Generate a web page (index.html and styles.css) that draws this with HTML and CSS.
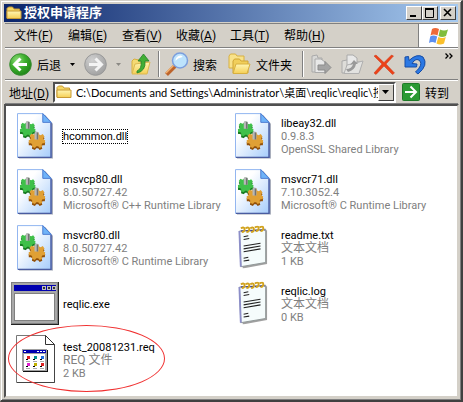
FILE: index.html
```html
<!DOCTYPE html>
<html lang="zh-CN">
<head>
    <meta charset="UTF-8">
    <meta name="viewport" content="width=device-width, initial-scale=1.0">
    <title>授权申请程序</title>
    <link rel="stylesheet" href="styles.css">
</head>
<body>
    <!-- shared icons -->
    <svg class="defs" width="0" height="0" aria-hidden="true">
        <defs>
            <linearGradient id="page" x1="0" y1="0" x2="1" y2="1">
                <stop offset="0.3" stop-color="#fff"/>
                <stop offset="1" stop-color="#a5ccfb"/>
            </linearGradient>
            <linearGradient id="yellow" x1="0" y1="0" x2="0" y2="1">
                <stop offset="0" stop-color="#fff6b4"/>
                <stop offset="1" stop-color="#f5cf55"/>
            </linearGradient>
            <radialGradient id="green" cx="0.35" cy="0.3" r="0.75">
                <stop offset="0" stop-color="#8fdc7a"/>
                <stop offset="0.5" stop-color="#3cae2c"/>
                <stop offset="1" stop-color="#1e8416"/>
            </radialGradient>
            <radialGradient id="grey" cx="0.35" cy="0.3" r="0.75">
                <stop offset="0" stop-color="#d0d0d0"/>
                <stop offset="1" stop-color="#a0a0a0"/>
            </radialGradient>
        </defs>
        <symbol id="gear" viewBox="-10 -10 20 20">
            <path d="M-2-9h4l.6 2.500 2 .8L7-7l2.200 2.800-1.600 2 .6 2L10 .5 9.500 4l-2.700.1-1.200 1.700.9 2.500L3.300 9.800 1.500 7.700h-2.300L-2.500 9.800-6 8.400l.3-2.700-1.400-1.500-2.700 0L-10 .6l2.300-1.200.4-2L-9-4.700-6.700-7.500l2.400 1.100 1.900-.8z"/>
        </symbol>
        <symbol id="dll" viewBox="0 0 37 48">
            <path d="M2 3h27l8 9v36H2z" fill="#6f7890" opacity=".6"/>
            <path d="M.5 1.500h26l8.500 9V46.500H.5z" fill="url(#page)" stroke="#8fb4f0"/>
            <path d="M1 46.500h34V11" fill="none" stroke="#4a5ca0" stroke-width="1.500"/>
            <path d="M26.500 1.500l8.500 9h-8.500z" fill="#6fb3f8" stroke="#4a7ad0"/>
            <use href="#gear" x="2" y="11" width="18" height="16" fill="#187a22"/>
            <use href="#gear" x="2" y="9" width="18" height="16" fill="#3fc04a"/>
            <use href="#gear" x="11" y="22" width="19" height="17" fill="#925009"/>
            <use href="#gear" x="11" y="20" width="19" height="17" fill="#e0a035"/>
            <path d="M9 10q2-2 4 0v7H9zM18 21q2-2 4 0v7h-4z" fill="#b8b8b8"/>
            <path d="M12 10v7M21 21v7" stroke="#727272" stroke-width="1.500"/>
        </symbol>
        <symbol id="text" viewBox="0 0 32 46">
            <path d="M4 7L31 5v36L5 46z" fill="#777" opacity=".7"/>
            <path d="M1.500 6L29.500 4v35.500L3 44z" fill="#f5fcfc" stroke="#8d9494"/>
            <path d="M1.500 6L3 44" stroke="#8c8ec8" stroke-width="2"/>
            <path d="M3 6l26-1" stroke="#46468c" stroke-width="1.500" stroke-dasharray="3 2"/>
            <path d="M3 3q4-2 4 1t-3 3M8 3q4-2 4 1t-3 3M13 3q4-2 4 1t-3 3M18 2q4-2 4 1t-3 3M23 2q4-2 4 1t-3 3" fill="none" stroke="#d1a21d" stroke-width="2"/>
            <path d="M6 12l5-1M6 15l6-1M6 22l18-3M6 25l18-3M6 28l18-3M6 35l5-1M6 38l6-1" stroke="#222" stroke-width="1.200"/>
        </symbol>
        <symbol id="folder" viewBox="0 0 16 14">
            <path d="M1 12V2.500L2.500 1h4L8 3h5.500v9z" fill="#f5d764" stroke="#c89a35"/>
            <path d="M1 12.500V5h14v7.500z" fill="url(#yellow)" stroke="#c89a35"/>
        </symbol>
    </svg>

    <div class="window">
        <header class="titlebar">
            <svg class="small-icon" viewBox="0 0 16 14"><use href="#folder"/></svg>
            <h1>授权申请程序</h1>
            <div class="window-buttons">
                <button aria-label="最小化"><svg viewBox="0 0 12 10"><path d="M2 8h6" stroke="#000" stroke-width="2"/></svg></button>
                <button aria-label="最大化"><svg viewBox="0 0 12 10"><path d="M1.500 1v8.500h8V1" fill="none" stroke="#000"/><path d="M1 1h9" stroke="#000" stroke-width="2"/></svg></button>
                <button class="close" aria-label="关闭"><svg viewBox="0 0 12 10"><path d="M2 1l7 7M9 1L2 8" stroke="#000" stroke-width="1.600"/></svg></button>
            </div>
        </header>

        <nav class="menubar">
            <div class="menu">
                <button>文件(<u>F</u>)</button>
                <button>编辑(<u>E</u>)</button>
                <button>查看(<u>V</u>)</button>
                <button>收藏(<u>A</u>)</button>
                <button>工具(<u>T</u>)</button>
                <button>帮助(<u>H</u>)</button>
            </div>
            <div class="flag">
                <svg width="20" height="18" viewBox="0 0 20 18">
                    <path d="M3 2q3-2 7 0L8.500 8.500q-4-2-7 0z" fill="#ee6a38"/>
                    <path d="M11 2.500q4 2 8 0L17 9q-4 2-7.500 0z" fill="#7fbd3c"/>
                    <path d="M1.200 9.500q3-2 7 0L6.500 16q-3.500-2-6.500 0z" fill="#5c8ff0"/>
                    <path d="M9.300 10q4 2 7.500 0L15 16.500q-4 2-7.500 0z" fill="#fbc02c"/>
                </svg>
            </div>
        </nav>

        <div class="toolbar">
            <button class="tool back">
                <svg width="23" height="23" viewBox="0 0 23 23"><circle cx="11.500" cy="11.500" r="10.800" fill="url(#green)" stroke="#3b8c34"/><path d="M18 11.500H6M11.500 5.500l-6 6 6 6" fill="none" stroke="#fff" stroke-width="3"/></svg>
                <span>后退</span>
            </button>
            <button class="tool arrow" aria-label="后退列表"><svg width="5" height="3" viewBox="0 0 5 3"><path d="M0 0h5L2.500 3z"/></svg></button>
            <button class="tool" aria-label="前进">
                <svg width="23" height="23" viewBox="0 0 23 23"><circle cx="11.500" cy="11.500" r="10.800" fill="url(#grey)" stroke="#999"/><path d="M5 11.500h12M11.500 5.500l6 6-6 6" fill="none" stroke="#f4f4f4" stroke-width="3"/></svg>
            </button>
            <button class="tool arrow" aria-label="前进列表"><svg width="5" height="3" viewBox="0 0 5 3"><path d="M0 0h5L2.500 3z" fill="#8b8984"/></svg></button>
            <button class="tool up" aria-label="向上">
                <svg width="20" height="23" viewBox="0 0 20 23">
                    <path d="M1 20V8l2-2 5 1 1 2h8l-1 11z" fill="#f4da73" stroke="#d8b040"/>
                    <path d="M1 21L4 11l15-2-3 12z" fill="url(#yellow)" stroke="#dcb850"/>
                    <path d="M6 18q5-2 4-10H7L12.500 1 18 8h-4q1 10-8 12z" fill="#41ae35" stroke="#23802a" stroke-width=".8"/>
                </svg>
            </button>
            <span class="separator"></span>
            <button class="tool search">
                <svg width="24" height="24" viewBox="0 0 24 24">
                    <path d="M1.500 22.500L10 14" stroke="#bd642b" stroke-width="4"/>
                    <path d="M1 21l8-8" stroke="#f2b271" stroke-width="1.500"/>
                    <circle cx="15" cy="8.500" r="7.500" fill="#bde3fc" stroke="#7c9fdd" stroke-width="1.500"/>
                    <path d="M10.500 9q0-5 5-5.500 2 0 2 1.500-5 1-7 4z" fill="#fff"/>
                </svg>
                <span>搜索</span>
            </button>
            <button class="tool folders">
                <svg width="23" height="22" viewBox="0 0 23 22">
                    <path d="M1 15V3l1.500-2h5L9 3h7v12z" fill="#f8e28a" stroke="#d8b040"/>
                    <path d="M5 20V8l1.500-2h5L13 8h7v12z" fill="#f1cf5b" stroke="#d0a535"/>
                    <path d="M5 20.500L8 11h14l-3 9.500z" fill="url(#yellow)" stroke="#d8b040"/>
                </svg>
                <span>文件夹</span>
            </button>
            <span class="separator"></span>
            <button class="tool edit" aria-label="移至">
                <svg width="21" height="21" viewBox="0 0 21 21"><path d="M1 18V2l5-1 1 3h4v14z" fill="#d8d8d6" stroke="#aaa"/><path d="M4 18.500V5h6l4 3v10.500z" fill="#e8e8e8" stroke="#aaa"/><path d="M7 11h7V7.500l6 6-6 6V16H7z" fill="#a4a4a4" stroke="#8c8c8c"/></svg>
            </button>
            <button class="tool edit" aria-label="复制到">
                <svg width="23" height="21" viewBox="0 0 23 21"><path d="M1 19V7l5-1 2 2h13l-3 11z" fill="#deddd9" stroke="#aaa"/><path d="M6 15V1h6l4 3v11z" fill="#e8e8e8" stroke="#aaa"/><path d="M3 19.500L6 11l16-4-4 12.500z" fill="#e2e2e0" stroke="#b0b0b0"/><path d="M5 15q6 0 7-5l-3 1 4-5 4 4-2 0q-1 6-8 8z" fill="#999"/></svg>
            </button>
            <button class="tool edit" aria-label="删除">
                <svg width="22" height="21" viewBox="0 0 22 21"><path d="M1 2l2-1 8 7.500L18.500 1l2 1-7.500 8 8.500 9-2 1.500-8.500-8.500L3 20.500 1 19l8-9z" fill="#ec4218" stroke="#cf3516" stroke-width=".5"/></svg>
            </button>
            <button class="tool edit" aria-label="撤消">
                <svg width="23" height="21" viewBox="0 0 23 21"><path d="M1 3l3.500-.5.5 4Q13-1 19 3q6 8-5 17l-2.500-2Q19 11 16 7q-4-4-8 2.500l5 .5-.5 3L1 13z" fill="#2b78e4" stroke="#174da5"/></svg>
            </button>
            <button class="tool more" aria-label="更多"><svg width="8" height="6" viewBox="0 0 8 6"><path d="M.5.500L3 3 .5 5.500M4.500.500L7 3 4.500 5.500" fill="none" stroke="#000" stroke-width="1.300"/></svg></button>
        </div>

        <form class="addressbar">
            <label for="address">地址(<u>D</u>)</label>
            <div class="combo">
                <svg class="small-icon" viewBox="0 0 16 14"><use href="#folder"/></svg>
                <input type="text" id="address" value="C:\Documents and Settings\Administrator\桌面\reqlic\reqlic\授权申请程序" autocomplete="off">
                <button type="button" aria-label="地址列表"><svg width="7" height="4" viewBox="0 0 7 4"><path d="M0 0h7L3.500 4z"/></svg></button>
            </div>
            <button type="button" class="go">
                <svg width="18" height="18" viewBox="0 0 18 18"><rect x=".5" y=".5" width="17" height="17" rx="1" fill="#2b9a34" stroke="#1e7a27"/><path d="M3 9h10M8.500 3.500L14 9l-5.500 5.500" fill="none" stroke="#fff" stroke-width="2"/></svg>
                <span>转到</span>
            </button>
        </form>

        <main class="pane">
            <ul class="files">
                <li>
                    <svg class="dll" viewBox="0 0 37 48"><use href="#dll"/></svg>
                    <div><p class="name focused">hcommon.dll</p></div>
                </li>
                <li>
                    <svg class="dll" viewBox="0 0 37 48"><use href="#dll"/></svg>
                    <div><p class="name">libeay32.dll</p><p>0.9.8.3</p><p>OpenSSL Shared Library</p></div>
                </li>
                <li>
                    <svg class="dll" viewBox="0 0 37 48"><use href="#dll"/></svg>
                    <div><p class="name">msvcp80.dll</p><p>8.0.50727.42</p><p>Microsoft® C++ Runtime Library</p></div>
                </li>
                <li>
                    <svg class="dll" viewBox="0 0 37 48"><use href="#dll"/></svg>
                    <div><p class="name">msvcr71.dll</p><p>7.10.3052.4</p><p>Microsoft® C Runtime Library</p></div>
                </li>
                <li>
                    <svg class="dll" viewBox="0 0 37 48"><use href="#dll"/></svg>
                    <div><p class="name">msvcr80.dll</p><p>8.0.50727.42</p><p>Microsoft® C Runtime Library</p></div>
                </li>
                <li>
                    <svg class="text" viewBox="0 0 32 46"><use href="#text"/></svg>
                    <div><p class="name">readme.txt</p><p class="type">文本文档</p><p>1 KB</p></div>
                </li>
                <li>
                    <svg class="exe" viewBox="0 0 48 43">
                        <path d="M0 0h48v43H0z" fill="#222"/>
                        <path d="M0 0h47v42H0z" fill="#808080"/>
                        <path d="M1 1h45v40H1z" fill="#a8a8a8"/>
                        <path d="M3 3h42v6H3z" fill="#0000b0"/>
                        <path d="M31 4h4v4h-4zM36 4h4v4h-4zM41 4h4v4h-4z" fill="#c0c0c0"/>
                        <path d="M32 5h2v2h-2zM37 5h2v2h-2zM42 5h2v2h-2z" fill="#333"/>
                        <path d="M3 11h41v28H3z" fill="#808080"/>
                        <path d="M4 12h39v26H4z" fill="#fff"/>
                    </svg>
                    <div><p class="name">reqlic.exe</p></div>
                </li>
                <li>
                    <svg class="text" viewBox="0 0 32 46"><use href="#text"/></svg>
                    <div><p class="name">reqlic.log</p><p class="type">文本文档</p><p>0 KB</p></div>
                </li>
                <li class="marked">
                    <svg class="req" viewBox="0 0 39 48">
                        <path d="M.5.500h29l9 9v38H.5z" fill="#fff" stroke="#777"/>
                        <path d="M29.500.500v9h9z" fill="#fff" stroke="#333"/>
                        <path d="M38.500 10v37.500H1" fill="none" stroke="#444"/>
                        <path d="M7 15h25v22H7z" fill="#111"/>
                        <path d="M6 14h25v22H6z" fill="#a0a0a0"/>
                        <path d="M7 15h23v3H7z" fill="#0000b0"/>
                        <path d="M8 16h2v1H8zM21 16h2v1h-2zM24 16h2v1h-2zM27 16h2v1h-2z" fill="#fff"/>
                        <path d="M8 19h21v16H8z" fill="#fff"/>
                        <path d="M11 21h3v3h-3zM25 28h3v3h-3z" fill="#e02020"/>
                        <path d="M18 21h3v3h-3z" fill="#079292"/>
                        <path d="M25 21h3v3h-3z" fill="#2470e0"/>
                        <path d="M11 28h3v3h-3z" fill="#e020d0"/>
                        <path d="M18 28h3v3h-3z" fill="#c0b000"/>
                        <path d="M10 24h2v1h-2zM17 24h2v1h-2zM24 24h2v1h-2zM10 31h2v1h-2zM17 31h2v1h-2zM24 31h2v1h-2z" fill="#000"/>
                        <path d="M10 26.500h4M17 26.500h4M24 26.500h4M10 33.500h4M17 33.500h4M24 33.500h4" stroke="#aaa"/>
                    </svg>
                    <div><p class="name">test_20081231.req</p><p class="type">REQ 文件</p><p>2 KB</p></div>
                </li>
            </ul>
        </main>
    </div>
</body>
</html>
```
FILE: styles.css
```css
*{
    box-sizing: border-box;
}
body{
    margin: 0;
    font-family: Roboto, "Noto Sans CJK SC", sans-serif;
    font-size: 11px;
    color: #000;
    background-color: #d4d0c8;
}
button, input{
    font: inherit;
    color: inherit;
    margin: 0;
    padding: 0;
    border: none;
    background: none;
}
svg{
    display: block;
    flex: none;
}
.defs{
    position: absolute;
}
.window{
    display: flex;
    flex-direction: column;
    min-height: 100vh;
    padding: 2px 2px 2px 3px;
    border: 1px solid #d4d0c8;
    border-right: 2px solid #404040;
    border-bottom: 2px solid #404040;
    box-shadow: inset 1px 1px #fff, inset -1px -1px #808080;
    background-color: #d4d0c8;
}
.small-icon{
    width: 16px;
    height: 14px;
}

/* title bar */
.titlebar{
    display: flex;
    align-items: center;
    height: 18px;
    margin: 1px 1px 0 0;
    padding: 0 2px;
    background: linear-gradient(to right, #0a246a, #a6caf0);
}
.titlebar h1{
    flex: 1;
    margin: 0 0 0 2px;
    font-size: 13px;
    line-height: 18px;
    color: #fff;
}
.window-buttons{
    display: flex;
}
.window-buttons button{
    width: 16px;
    height: 14px;
    padding: 1px;
    border: 1px solid;
    border-color: #fff #404040 #404040 #fff;
    background-color: #d4d0c8;
}
.window-buttons .close{
    margin-left: 2px;
}

/* menu */
.menubar{
    display: flex;
    height: 25px;
    margin: 1px 1px 0;
    border-top: 1px solid #808080;
    border-bottom: 1px solid #808080;
}
.menu{
    flex: 1;
    display: flex;
    align-items: center;
    padding-left: 1px;
    border-right: 1px solid #808080;
    font-size: 12px;
}
.menu button{
    width: 54px;
    line-height: 18px;
    padding-left: 8px;
    text-align: left;
    white-space: nowrap;
}
.flag{
    display: flex;
    align-items: center;
    justify-content: center;
    width: 39px;
    background-color: #fff;
}

/* toolbar */
.toolbar{
    display: flex;
    align-items: center;
    height: 32px;
    margin: 0 1px;
    padding-left: 4px;
    border-top: 1px solid #fff;
    border-bottom: 1px solid #808080;
    font-size: 12px;
}
.tool{
    display: flex;
    align-items: center;
    gap: 5px;
    white-space: nowrap;
}
.arrow{
    padding: 0 9px;
}
.up{
    margin-left: 1px;
}
.separator{
    width: 2px;
    height: 26px;
    margin: 0 5px 0 7px;
    border-left: 1px solid #808080;
    border-right: 1px solid #fff;
}
.search{
    gap: 4px;
}
.folders{
    margin-left: 11px;
}
.folders + .separator{
    margin-left: 10px;
    margin-right: 7px;
}
.edit{
    margin-right: 9px;
}
.more{
    align-self: flex-start;
    margin: 4px 5px 0 auto;
}

/* address */
.addressbar{
    display: flex;
    align-items: center;
    height: 24px;
    margin: 0 1px;
    padding: 0 9px 0 4px;
    border-top: 1px solid #fff;
    border-bottom: 1px solid #808080;
    font-size: 12px;
}
.addressbar label{
    width: 44px;
    white-space: nowrap;
}
.combo{
    flex: 1;
    display: flex;
    align-items: center;
    min-width: 0;
    height: 21px;
    padding-left: 1px;
    border: 2px solid;
    border-color: #505050 #fff #fff #505050;
    background-color: #fff;
}
.combo input{
    flex: 1;
    min-width: 0;
    height: 17px;
    margin-left: 4px;
    font-family: Lato, "Noto Sans CJK SC", sans-serif;
    font-size: 11px;
    outline: none;
}
.combo button{
    display: flex;
    align-items: center;
    justify-content: center;
    width: 16px;
    height: 17px;
    border: 1px solid;
    border-color: #fff #404040 #404040 #fff;
    background-color: #d4d0c8;
}
.go{
    display: flex;
    align-items: center;
    gap: 5px;
    margin-left: 6px;
    white-space: nowrap;
}

/* files */
.pane{
    flex: 1;
    padding: 5px;
    border: 2px solid;
    border-color: #505050 #d4d0c8 #d4d0c8 #505050;
    background-color: #fff;
}
.files{
    display: grid;
    grid-template-columns: repeat(auto-fill, 218px);
    grid-auto-rows: 48px;
    row-gap: 8px;
    margin: 0;
    padding: 0;
    list-style: none;
}
.files li{
    display: grid;
    grid-template-columns: 48px 1fr;
    gap: 4px;
    align-items: center;
    position: relative;
}
.files li div{
    padding-top: 2px;
}
.files svg{
    justify-self: center;
}
.files p{
    width: fit-content;
    margin: 0;
    line-height: 13px;
    white-space: nowrap;
    color: #808080;
}
.files .name{
    color: #000;
}
.files .type{
    font-size: 12px;
}
.files .focused{
    outline: 1px dotted #000;
}
.dll{
    width: 36px;
    height: 47px;
}
.text{
    width: 30px;
    height: 44px;
}
.exe{
    width: 48px;
    height: 43px;
}
.req{
    width: 39px;
    height: 48px;
}
/* red ring round the request file */
.marked::after{
    content: "";
    position: absolute;
    left: -3px;
    top: -10px;
    width: 155px;
    height: 65px;
    border: 1px solid #f03030;
    border-radius: 50%;
}
```
